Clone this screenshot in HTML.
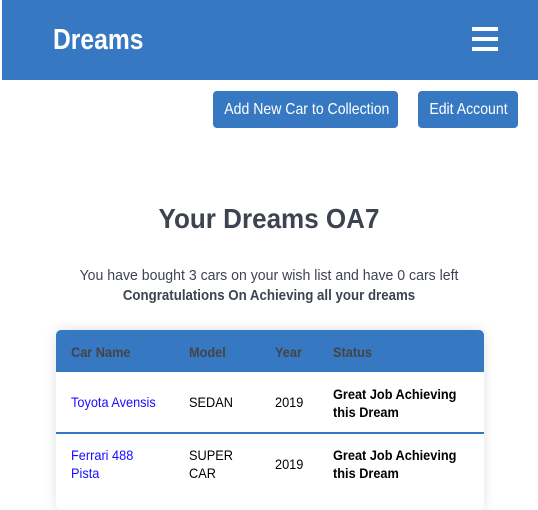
<!DOCTYPE html>
<html><head><meta charset="utf-8"><style>
body{margin:0;width:538px;height:491px;overflow:hidden;background:#fff;font-family:"Liberation Sans",sans-serif;position:relative}
.hdr{position:absolute;left:2px;top:0;width:536px;height:80px;background:#3778c2}
.logo{position:absolute;left:51px;top:24px;color:#fff;font-weight:bold;font-size:29px;transform:scaleX(.85);transform-origin:left}
.hb{position:absolute;width:26px;height:4px;background:#fff}
.btn{position:absolute;top:91px;height:37px;background:#3778c2;color:#fff;border-radius:4px;font-size:16px;line-height:37px;text-align:center;white-space:nowrap}
.btn span{display:inline-block;transform:scaleX(.88)}
h1{position:absolute;left:0;width:538px;top:203px;margin:0;text-align:center;font-size:28px;color:#3d4450;transform:scaleX(.93)}
.p{position:absolute;left:0;width:538px;text-align:center;font-size:15px;color:#3d4450;transform:scaleX(.94)}
.tbl{position:absolute;left:56px;top:330px;width:428px;height:180px;border-radius:5px;overflow:hidden;box-shadow:0 0 12px rgba(0,0,0,.12)}
.th{position:absolute;left:0;top:0;width:428px;height:42px;background:#3778c2}
.c{position:absolute;font-size:14px;transform:scaleX(.91);transform-origin:left;white-space:nowrap}
</style></head><body>
<div class="hdr"><div class="logo">Dreams</div>
<div class="hb" style="top:27px;left:470px"></div><div class="hb" style="top:37px;left:470px"></div><div class="hb" style="top:47px;left:470px"></div></div>
<div class="btn" style="left:213px;width:185px"><span>Add New Car to Collection</span></div>
<div class="btn" style="left:418px;width:100px"><span>Edit Account</span></div>
<h1>Your Dreams OA7</h1>
<div class="p" style="top:267px">You have bought 3 cars on your wish list and have 0 cars left</div>
<div class="p" style="top:287px;font-weight:bold;transform:scaleX(.885)">Congratulations On Achieving all your dreams</div>
<div class="tbl"><div class="th"></div>
<div class="c" style="left:15px;top:14px;font-weight:bold;color:#444">Car Name</div>
<div class="c" style="left:133px;top:14px;font-weight:bold;color:#444">Model</div>
<div class="c" style="left:219px;top:14px;font-weight:bold;color:#444">Year</div>
<div class="c" style="left:277px;top:14px;font-weight:bold;color:#444">Status</div>
<div class="c" style="left:15px;top:64px;color:#1a0dff">Toyota Avensis</div>
<div class="c" style="left:133px;top:64px">SEDAN</div>
<div class="c" style="left:219px;top:64px">2019</div>
<div class="c" style="left:277px;top:55px;font-weight:bold;line-height:18px">Great Job Achieving<br>this Dream</div>
<div style="position:absolute;left:0;top:102px;width:428px;height:2px;background:#3778c2"></div>
<div class="c" style="left:15px;top:116px;color:#1a0dff;line-height:18px">Ferrari 488<br>Pista</div>
<div class="c" style="left:133px;top:116px;line-height:18px">SUPER<br>CAR</div>
<div class="c" style="left:219px;top:126px">2019</div>
<div class="c" style="left:277px;top:116px;font-weight:bold;line-height:18px">Great Job Achieving<br>this Dream</div>
</div>
</body></html>
